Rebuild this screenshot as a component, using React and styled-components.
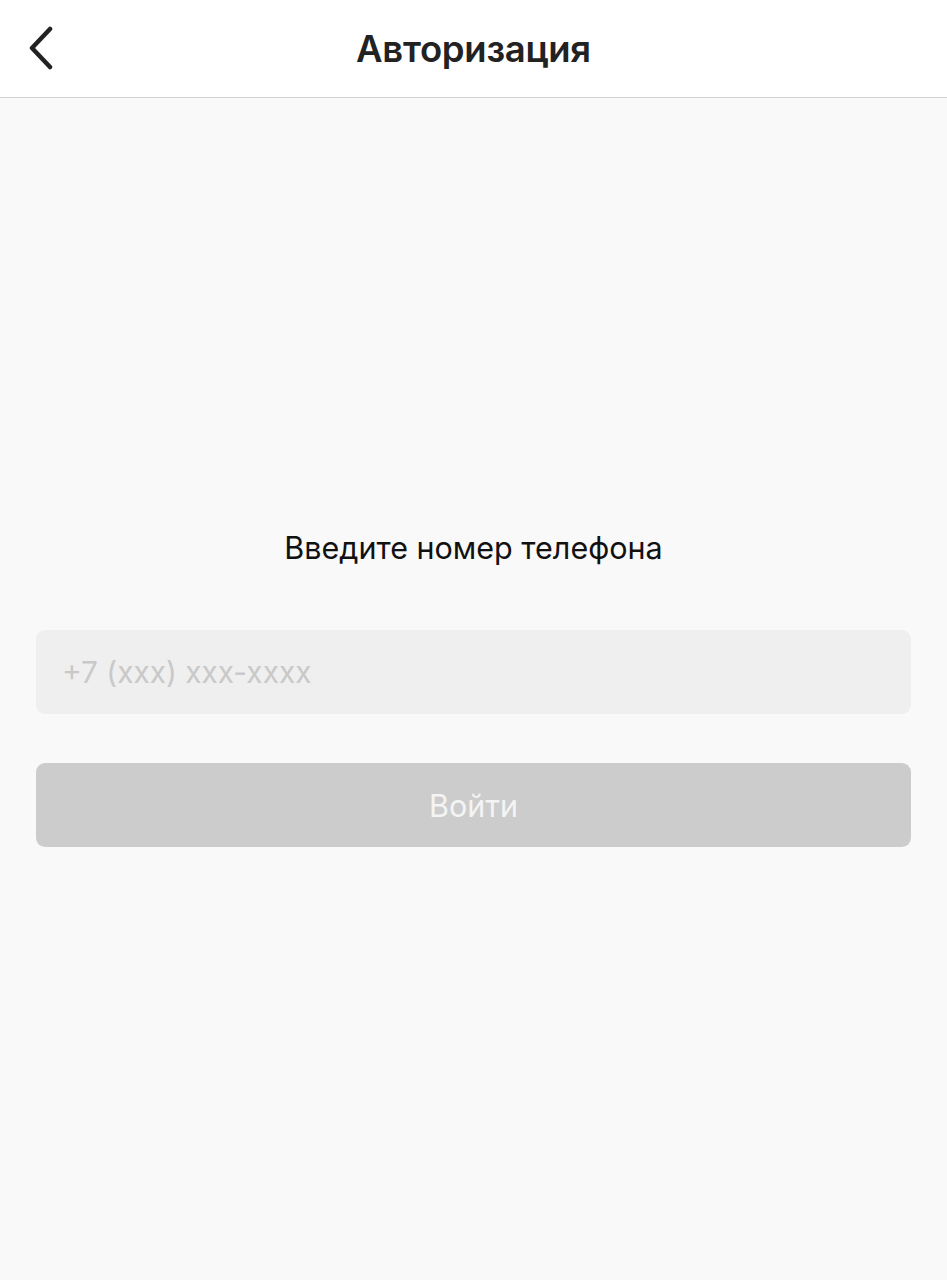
import React from 'react';
import styled, { createGlobalStyle } from 'styled-components';

const GlobalStyle = createGlobalStyle`
  * { box-sizing: border-box; }
  html, body {
    margin: 0;
    padding: 0;
    background: #f9f9f9;
    font-family: Inter, "Noto Sans", sans-serif;
  }
`;

const Page = styled.div`
  min-height: 1280px;
  background: #f9f9f9;
`;

const Header = styled.header`
  height: 98px;
  background: #fff;
  border-bottom: 1px solid #d3d3d3;
  display: flex;
  align-items: center;
  justify-content: center;
  position: relative;
`;

const BackButton = styled.button`
  position: absolute;
  left: 24px;
  top: 24px;
  width: 40px;
  height: 48px;
  padding: 0;
  border: none;
  background: none;
  display: flex;
  align-items: center;
  justify-content: flex-start;
`;

const Title = styled.h1`
  margin: 0;
  font-size: 36.5px;
  font-weight: 600;
  color: #222;
  letter-spacing: -0.3px;
`;

const Content = styled.main`
  padding: 431px 36px 0;
  display: flex;
  flex-direction: column;
`;

const Label = styled.p`
  margin: 0 0 63px;
  text-align: center;
  font-size: 30.5px;
  line-height: 38px;
  color: #111;
`;

const Input = styled.input`
  height: 84px;
  border: none;
  border-radius: 9px;
  background: #efefef;
  padding: 0 26px;
  font-family: inherit;
  font-size: 29.8px;
  color: #222;
  outline: none;

  &::placeholder {
    color: #c9c9c9;
  }
`;

const Submit = styled.button`
  margin-top: 49px;
  height: 84px;
  border: none;
  border-radius: 9px;
  background: #cccccc;
  color: #f4f4f4;
  font-family: inherit;
  font-size: 30.5px;
`;

function BackIcon() {
  return (
    <svg width="30" height="44" viewBox="0 0 30 44" fill="none">
      <path
        d="M26 3 L8 22 L26 41"
        stroke="#222"
        strokeWidth="4.5"
        strokeLinecap="round"
        strokeLinejoin="round"
      />
    </svg>
  );
}

export default function App() {
  return (
    <Page>
      <GlobalStyle />
      <Header>
        <BackButton aria-label="Назад">
          <BackIcon />
        </BackButton>
        <Title>Авторизация</Title>
      </Header>
      <Content>
        <Label>Введите номер телефона</Label>
        <Input type="tel" placeholder="+7 (xxx) xxx-xxxx" />
        <Submit disabled>Войти</Submit>
      </Content>
    </Page>
  );
}
